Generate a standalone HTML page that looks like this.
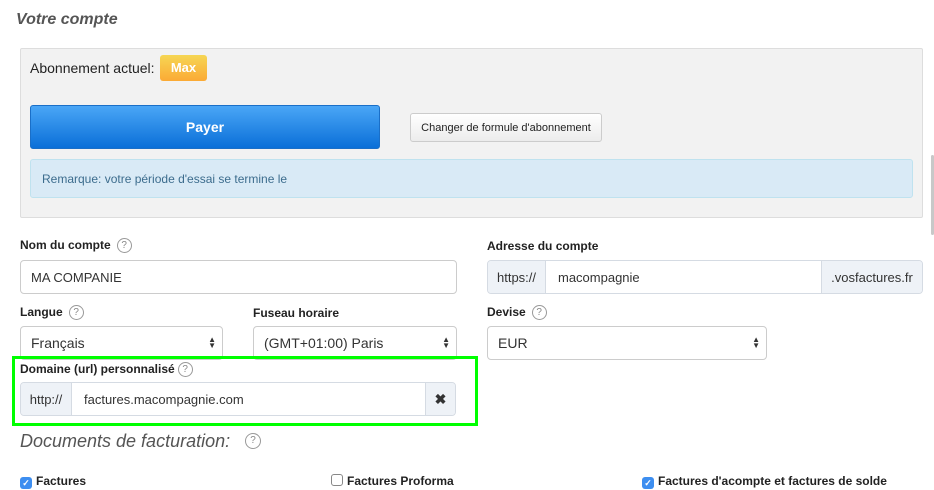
<!DOCTYPE html>
<html><head><meta charset="utf-8"><style>
*{box-sizing:border-box;margin:0;padding:0}
body{width:934px;height:490px;background:#fff;font-family:"Liberation Sans",sans-serif;color:#333;position:relative;overflow:hidden}
.a{position:absolute}
.lbl{font-size:12px;font-weight:bold;color:#222;white-space:nowrap}
.q{display:inline-block;width:15px;height:15px;border:1px solid #999;border-radius:50%;font-size:10px;color:#888;text-align:center;line-height:13px;font-weight:normal;vertical-align:middle;margin-left:6px;background:#fff}
.inp{border:1px solid #ccc;border-radius:4px;background:#fff;font-size:13px;padding-left:10px;display:flex;align-items:center}
.grp{display:flex;border:1px solid #d5dbe3;border-radius:4px;overflow:hidden;font-size:13px}
.ad{background:#eef2f7;display:flex;align-items:center;justify-content:center;color:#333}
.arr{position:absolute;right:6px;top:10px;font-size:8px;line-height:6px;color:#333}
.cb{display:inline-block;width:12px;height:12px;border-radius:3px;vertical-align:-1px;margin-right:4px}
</style></head><body>
<div class="a" style="left:16px;top:11px;font-size:16px;font-weight:bold;font-style:italic;color:#555">Votre compte</div>

<div class="a" style="left:20px;top:48px;width:903px;height:170px;background:#f2f2f2;border:1px solid #ddd;border-radius:2px"></div>
<div class="a" style="left:30px;top:60px;font-size:14px;color:#222">Abonnement actuel:</div>
<div class="a" style="left:160px;top:55px;width:47px;height:26px;border-radius:3px;background:linear-gradient(#f6d654,#fbaa35);color:#fff;font-weight:bold;font-size:13px;text-align:center;line-height:26px">Max</div>
<div class="a" style="left:30px;top:105px;width:350px;height:44px;border-radius:3px;background:linear-gradient(#4aa6f6,#0a6fd8);border:1px solid #1a6fc8;color:#fff;font-size:14px;font-weight:bold;text-align:center;line-height:42px">Payer</div>
<div class="a" style="left:410px;top:113px;width:192px;height:29px;border-radius:3px;background:linear-gradient(#fff,#ececec);border:1px solid #ccc;font-size:11px;text-align:center;line-height:28px;color:#222">Changer de formule d'abonnement</div>
<div class="a" style="left:30px;top:159px;width:883px;height:39px;border-radius:3px;background:#d9eaf6;border:1px solid #bfe2ef;font-size:12px;color:#3c6c8d;padding-left:11px;line-height:38px">Remarque: votre période d'essai se termine le</div>

<div class="a lbl" style="left:20px;top:238px">Nom du compte<span class="q">?</span></div>
<div class="a inp" style="left:20px;top:260px;width:437px;height:34px">MA COMPANIE</div>

<div class="a lbl" style="left:487px;top:239px">Adresse du compte</div>
<div class="a grp" style="left:487px;top:260px;width:436px;height:34px">
<div class="ad" style="width:58px;border-right:1px solid #d5dbe3">https://</div>
<div style="flex:1;background:#fff;display:flex;align-items:center;padding-left:12px;border-right:1px solid #d5dbe3">macompagnie</div>
<div class="ad" style="width:100px">.vosfactures.fr</div>
</div>

<div class="a lbl" style="left:20px;top:305px">Langue<span class="q">?</span></div>
<div class="a inp" style="left:20px;top:326px;width:203px;height:34px;font-size:14px">Français<span class="arr">▲<br>▼</span></div>
<div class="a lbl" style="left:253px;top:306px">Fuseau horaire</div>
<div class="a inp" style="left:253px;top:326px;width:204px;height:34px;font-size:14px">(GMT+01:00) Paris<span class="arr">▲<br>▼</span></div>
<div class="a lbl" style="left:487px;top:305px">Devise<span class="q">?</span></div>
<div class="a inp" style="left:487px;top:326px;width:280px;height:34px;font-size:14px">EUR<span class="arr">▲<br>▼</span></div>

<div class="a" style="left:12px;top:356px;width:466px;height:70px;border:3px solid #00ff00"></div>
<div class="a lbl" style="left:20px;top:362px">Domaine (url) personnalisé<span class="q" style="margin-left:3px">?</span></div>
<div class="a grp" style="left:20px;top:382px;width:436px;height:34px">
<div class="ad" style="width:51px;border-right:1px solid #d5dbe3">http://</div>
<div style="flex:1;background:#fff;display:flex;align-items:center;padding-left:12px;border-right:1px solid #d5dbe3">factures.macompagnie.com</div>
<div class="ad" style="width:29px;font-weight:bold;font-size:14px">✖</div>
</div>

<div class="a" style="left:20px;top:431px;font-size:18px;font-style:italic;color:#555">Documents de facturation:</div>
<div class="a" style="left:239px;top:432px"><span class="q" style="width:16px;height:16px;line-height:14px">?</span></div>

<div class="a lbl" style="left:20px;top:474px"><span class="cb" style="background:#3d8ef0;color:#fff;font-size:9px;text-align:center;line-height:12px">✓</span>Factures</div>
<div class="a lbl" style="left:331px;top:474px"><span class="cb" style="border:1px solid #888;background:#fff"></span>Factures Proforma</div>
<div class="a lbl" style="left:642px;top:474px"><span class="cb" style="background:#3d8ef0;color:#fff;font-size:9px;text-align:center;line-height:12px">✓</span>Factures d'acompte et factures de solde</div>

<div class="a" style="left:931px;top:155px;width:3px;height:80px;background:#c8c8c8;border-radius:2px"></div>
</body></html>
